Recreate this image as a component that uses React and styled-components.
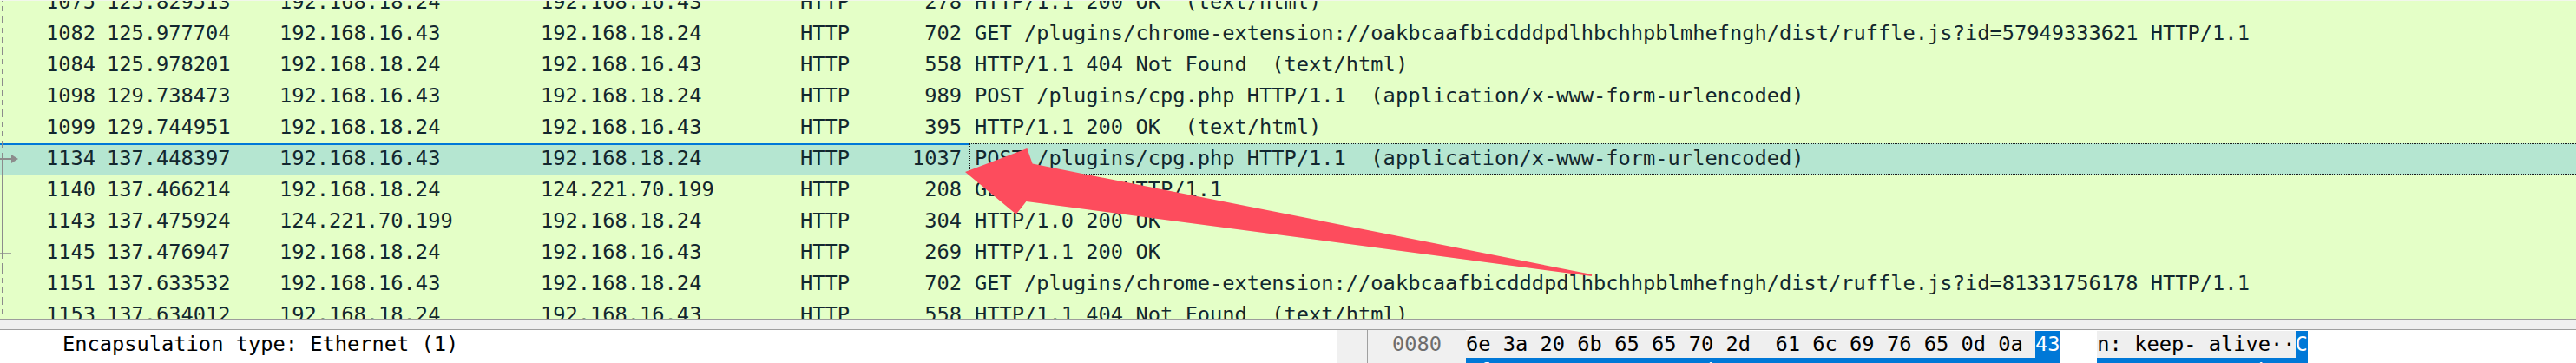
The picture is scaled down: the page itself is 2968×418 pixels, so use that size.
import React from "react";
import styled, { createGlobalStyle } from "styled-components";

const GlobalStyle = createGlobalStyle`
  html, body {
    margin: 0;
    padding: 0;
    background: #fff;
    overflow: hidden;
  }
`;

const Page = styled.div`
  position: relative;
  width: 2968px;
  height: 418px;
  overflow: hidden;
  font-family: "DejaVu Sans Mono", monospace;
  font-size: 23.7px;
  color: #12272e;
  background: #fff;
`;

const PacketList = styled.div`
  height: 366px;
  border-top: 1px solid #f2f7ec;
  background: #e4ffc7;
  overflow: hidden;
`;

// list is scrolled: first row is cut in half
const Rows = styled.div`
  margin-top: -16px;
`;

const Row = styled.div`
  display: grid;
  grid-template-columns: 22px 88px 212px 301px 299px 88px 107px 1fr;
  height: 36px;
  line-height: 34px;
  white-space: pre;
  background: ${(p) => (p.$selected ? "#b5e6d1" : "#e4ffc7")};
`;

const Cell = styled.div`
  overflow: hidden;
  text-align: ${(p) => (p.$right ? "right" : "left")};
  padding-left: ${(p) => p.$pl || 0}px;
  padding-right: ${(p) => p.$pr || 0}px;
  box-shadow: ${(p) => (p.$selected ? "inset 0 2px 0 #0078d7" : "none")};

  svg {
    display: block;
  }
`;

// focus rectangle runs past the right edge of the window
const InfoCell = styled.div`
  overflow: hidden;
  padding-left: 6px;
  margin-right: -6px;
  ${(p) =>
    p.$selected &&
    `
    outline: 1px dotted #1a1a1a;
    outline-offset: -1px;
  `}
`;

const Splitter = styled.div`
  height: 11px;
  background: #f0f0f0;
  border-top: 1px solid #9c9c9c;
  border-bottom: 1px solid #a0a0a0;
`;

const BottomPanes = styled.div`
  display: flex;
  height: 38px;
`;

const TreePane = styled.div`
  width: 1575px;
  display: flex;
  border-right: 1px solid #a0a0a0;
`;

const TreeBody = styled.div`
  flex: 1;
  background: #fff;
  padding-top: 1px;
`;

const TreeLine = styled.div`
  height: 31px;
  line-height: 31px;
  padding-left: 72px;
  color: #000;
  white-space: pre;
`;

const ScrollTrack = styled.div`
  width: 35px;
  background: #f0f0f0;
`;

const HexPane = styled.div`
  flex: 1;
  padding-top: 1px;
  background: linear-gradient(to right, #f0f0f0 113px, #fff 113px);
`;

const HexLine = styled.div`
  display: flex;
  height: 31px;
  line-height: 31px;
  white-space: pre;
  color: #000;
`;

const Offset = styled.span`
  width: 113px;
  box-sizing: border-box;
  padding-left: 28px;
  color: #6d6d6d;
`;

const Bytes = styled.span`
  background: ${(p) =>
    p.$sel ? "#0078d7" : p.$related ? "#efefef" : "transparent"};
  color: ${(p) => (p.$sel ? "#fff" : "#000")};
`;

const ArrowLayer = styled.svg`
  position: absolute;
  left: 0;
  top: 0;
  pointer-events: none;
`;

const GREY = "#8c8c8c";

function Marker({ kind }) {
  return (
    <svg width="22" height="36" viewBox="0 0 22 36">
      {kind === "dash" && (
        <line x1="2.5" y1="0" x2="2.5" y2="36" stroke={GREY} strokeDasharray="6 5" />
      )}
      {kind === "solid" && <line x1="2.5" y1="0" x2="2.5" y2="36" stroke={GREY} />}
      {kind === "arrow" && (
        <>
          <line x1="2.5" y1="0" x2="2.5" y2="18" stroke={GREY} strokeDasharray="6 5" />
          <line x1="2.5" y1="18" x2="2.5" y2="36" stroke={GREY} />
          <line x1="0" y1="18" x2="14" y2="18" stroke={GREY} strokeWidth="2" />
          <path d="M13 13 L21 18 L13 23 Z" fill={GREY} />
        </>
      )}
      {kind === "end" && (
        <>
          <line x1="2.5" y1="0" x2="2.5" y2="19" stroke={GREY} />
          <line x1="2.5" y1="19" x2="2.5" y2="36" stroke={GREY} strokeDasharray="6 5" />
          <line x1="0" y1="19" x2="13" y2="19" stroke={GREY} strokeWidth="1.5" />
        </>
      )}
    </svg>
  );
}

const packets = [
  ["dash", "1075", "125.829513", "192.168.18.24", "192.168.16.43", "278", "HTTP/1.1 200 OK  (text/html)"],
  ["dash", "1082", "125.977704", "192.168.16.43", "192.168.18.24", "702", "GET /plugins/chrome-extension://oakbcaafbicdddpdlhbchhpblmhefngh/dist/ruffle.js?id=57949333621 HTTP/1.1"],
  ["dash", "1084", "125.978201", "192.168.18.24", "192.168.16.43", "558", "HTTP/1.1 404 Not Found  (text/html)"],
  ["dash", "1098", "129.738473", "192.168.16.43", "192.168.18.24", "989", "POST /plugins/cpg.php HTTP/1.1  (application/x-www-form-urlencoded)"],
  ["dash", "1099", "129.744951", "192.168.18.24", "192.168.16.43", "395", "HTTP/1.1 200 OK  (text/html)"],
  ["arrow", "1134", "137.448397", "192.168.16.43", "192.168.18.24", "1037", "POST /plugins/cpg.php HTTP/1.1  (application/x-www-form-urlencoded)", true],
  ["solid", "1140", "137.466214", "192.168.18.24", "124.221.70.199", "208", "GET /upload HTTP/1.1"],
  ["solid", "1143", "137.475924", "124.221.70.199", "192.168.18.24", "304", "HTTP/1.0 200 OK"],
  ["end", "1145", "137.476947", "192.168.18.24", "192.168.16.43", "269", "HTTP/1.1 200 OK"],
  ["dash", "1151", "137.633532", "192.168.16.43", "192.168.18.24", "702", "GET /plugins/chrome-extension://oakbcaafbicdddpdlhbchhpblmhefngh/dist/ruffle.js?id=81331756178 HTTP/1.1"],
  ["dash", "1153", "137.634012", "192.168.18.24", "192.168.16.43", "558", "HTTP/1.1 404 Not Found  (text/html)"],
];

function PacketRow({ p }) {
  const [mark, no, time, src, dst, len, info, sel] = p;
  return (
    <Row $selected={sel}>
      <Cell $selected={sel}>
        <Marker kind={mark} />
      </Cell>
      <Cell $selected={sel} $right>
        {no}
      </Cell>
      <Cell $selected={sel} $pl={13}>
        {time}
      </Cell>
      <Cell $selected={sel}>{src}</Cell>
      <Cell $selected={sel}>{dst}</Cell>
      <Cell $selected={sel}>HTTP</Cell>
      <Cell $selected={sel} $right $pr={9}>
        {len}
      </Cell>
      <InfoCell $selected={sel}>{info}</InfoCell>
    </Row>
  );
}

function App() {
  return (
    <Page>
      <GlobalStyle />
      <PacketList>
        <Rows>
          {packets.map((p) => (
            <PacketRow key={p[1]} p={p} />
          ))}
        </Rows>
      </PacketList>
      <Splitter />
      <BottomPanes>
        <TreePane>
          <TreeBody>
            <TreeLine>Encapsulation type: Ethernet (1)</TreeLine>
          </TreeBody>
          <ScrollTrack />
        </TreePane>
        <HexPane>
          <HexLine>
            <Offset>0080</Offset>
            <Bytes $related>6e 3a 20 6b 65 65 70 2d  61 6c 69 76 65 0d 0a </Bytes>
            <Bytes $sel>43</Bytes>
            <Bytes>   </Bytes>
            <Bytes $related>n: keep- alive··</Bytes>
            <Bytes $sel>C</Bytes>
          </HexLine>
          <HexLine>
            <Offset>0090</Offset>
            <Bytes $sel>6f 6e 74 65 6e 74 2d 4c  65 6e 67 74 68 3a 20 31</Bytes>
            <Bytes>   </Bytes>
            <Bytes $sel>ontent-L ength: 1</Bytes>
          </HexLine>
        </HexPane>
      </BottomPanes>
      <ArrowLayer width="2968" height="418" viewBox="0 0 2968 418">
        <polygon
          points="1112,198 1183.4,170.9 1189.6,188.6 1834.2,316 1833.8,318 1182.4,232 1170.8,246.8"
          fill="#fd4c5d"
        />
      </ArrowLayer>
    </Page>
  );
}

export default App;
